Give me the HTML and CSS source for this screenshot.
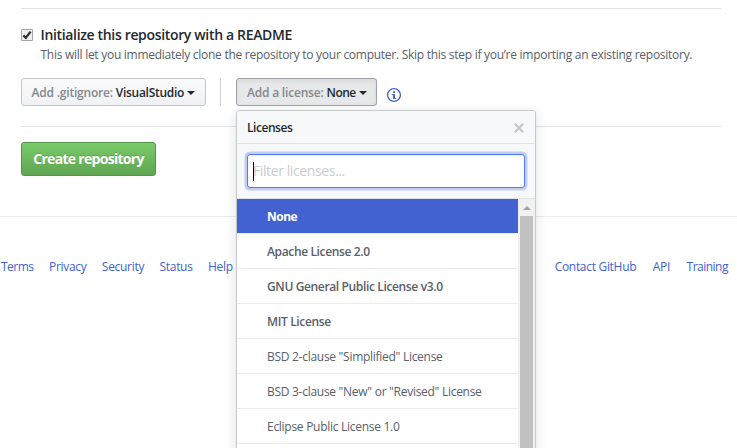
FILE: index.html
```html
<!DOCTYPE html>
<html lang="en">
<head>
<meta charset="utf-8">
<title>Create a New Repository</title>
<link rel="stylesheet" href="styles.css">
</head>
<body>
<main class="form">
  <section class="options">
    <div class="init">
      <span class="checkbox"><svg width="12" height="12" viewBox="0 0 12 12"><path d="M2.3 6.4 4.8 8.8 9.6 2.6" fill="none" stroke="#333" stroke-width="2.3"/></svg></span>
      <div>
        <div class="init-title">Initialize this repository with a README</div>
        <p class="note">This will let you immediately clone the repository to your computer. Skip this step if you’re importing an existing repository.</p>
      </div>
    </div>
    <div class="selectors">
      <button class="btn btn-ignore"><span class="muted">Add .gitignore:</span> <span class="value">VisualStudio</span><i class="caret"></i></button>
      <span class="divider"></span>
      <div class="license">
        <button class="btn btn-license"><span class="muted">Add a license:</span> <span class="value">None</span><i class="caret"></i></button>
        <div class="menu">
          <div class="menu-header"><span>Licenses</span><svg width="10" height="10" viewBox="0 0 10 10"><path d="M.8.8 9.2 9.2M9.2.8.8 9.2" stroke="#c3c6ca" stroke-width="2"/></svg></div>
          <div class="filter"><div class="filter-input"><i class="cursor"></i><span>Filter licenses...</span></div></div>
          <div class="list">
            <ul class="items">
              <li class="selected">None</li>
              <li class="featured">Apache License 2.0</li>
              <li class="featured">GNU General Public License v3.0</li>
              <li class="featured">MIT License</li>
              <li>BSD 2-clause "Simplified" License</li>
              <li>BSD 3-clause "New" or "Revised" License</li>
              <li>Eclipse Public License 1.0</li>
              <li></li>
            </ul>
            <div class="scrollbar"><i class="up"></i><i class="thumb"></i></div>
          </div>
        </div>
      </div>
      <svg class="info" width="14" height="16" viewBox="0 0 14 16"><path fill="#4162d0" fill-rule="evenodd" d="M6.3 5.69a.942.942 0 0 1-.28-.7c0-.28.09-.52.28-.7.19-.18.42-.28.7-.28.28 0 .52.09.7.28.18.19.28.42.28.7 0 .28-.09.52-.28.7a1 1 0 0 1-.7.3c-.28 0-.52-.11-.7-.3zM8 7.99c-.02-.25-.11-.48-.31-.69-.2-.19-.42-.3-.69-.31H6c-.27.02-.48.13-.69.31-.2.2-.3.44-.31.69h1v3c.02.27.11.5.31.69.2.2.42.31.69.31h1c.27 0 .48-.11.69-.31.2-.19.3-.42.31-.69H8V7.98v.01zM7 2.3c-3.14 0-5.7 2.54-5.7 5.68 0 3.14 2.56 5.7 5.7 5.7s5.7-2.55 5.7-5.7c0-3.15-2.56-5.69-5.7-5.69v.01zM7 .98c3.86 0 7 3.14 7 7s-3.14 7-7 7-7-3.12-7-7 3.14-7 7-7z"/></svg>
    </div>
  </section>
  <button class="create">Create repository</button>
</main>
<footer class="footer">
  <nav class="links links-left"><a class="tight">Terms</a><a>Privacy</a><a>Security</a><a>Status</a><a>Help</a></nav>
  <nav class="links"><a>Contact GitHub</a><a>API</a><a class="tight">Training</a></nav>
</footer>
</body>
</html>
```
FILE: styles.css
```css
* { box-sizing: border-box; }
body { margin: 0; height: 448px; overflow: hidden; background: #fff; color: #24292e; font: 12px/18px "Open Sans", "Noto Sans", sans-serif; }
button { font: inherit; }
.form { width: 700px; margin: 8px 0 0 21px; }
.options { height: 119px; padding-top: 17px; border: solid #dfe2e5; border-width: 1px 0; }
.init { display: flex; gap: 7.5px; height: 52px; }
.checkbox { flex: none; display: flex; width: 12px; height: 12px; margin-top: 3px; border-radius: 1px; background: #eee; box-shadow: inset 0 0 0 1px #a6a6a6; }
.init-title { font-size: 14px; line-height: 18px; font-weight: 550; letter-spacing: -.34px; white-space: nowrap; }
.note { margin: 2px 0 0; color: #586069; letter-spacing: -.27px; white-space: nowrap; }
.selectors { display: flex; }
.btn { display: flex; align-items: center; height: 28px; padding: 2px 0 0 9.5px; border: 1px solid #c3c6c9; border-radius: 3px; background: linear-gradient(#fafbfc, #eff1f5); color: #24292e; font-weight: 550; letter-spacing: -.2px; white-space: nowrap; }
.btn-ignore { width: 185px; }
.btn-license { width: 141px; padding-left: 10px; background: #e6e8ea; border-color: #9fa3a7; box-shadow: inset 0 2px 4px rgba(27,31,35,.08); }
.muted { color: #85898d; margin-right: 3px; }
.btn .value { letter-spacing: -.3px; }
.btn-license .value { letter-spacing: -.5px; }
.caret { margin: -1px 0 0 3px; border: 4px solid transparent; border-top-color: #24292e; border-bottom: 0; }
.divider { width: 1px; height: 28px; margin: 0 15px 0 14px; background: #cfd1d4; }
.license { position: relative; }
.info { margin: 9px 0 0 10px; }
.create { display: block; width: 135px; height: 34px; margin-top: 15px; padding: 0; border: 1px solid #53964a; border-radius: 3px; background: linear-gradient(#79cb69, #5fa552); color: #fff; font-size: 14px; font-weight: 700; letter-spacing: -.7px; white-space: nowrap; text-shadow: 0 -1px 0 rgba(0,0,0,.15); }
.footer { display: flex; justify-content: space-between; margin-top: 40px; padding: 41px 9px 0 1px; border-top: 1px solid #eaecef; }
.links { display: flex; gap: 16.5px; color: #4162d0; letter-spacing: -.3px; }
.links-left { gap: 15.4px; }
.links .tight { letter-spacing: -.5px; }
.menu { position: absolute; z-index: 2; top: 32px; left: 0; width: 300px; height: 360px; border: 1px solid #c6c8ca; border-radius: 3px; background: #fff; box-shadow: 0 3px 12px rgba(27,31,35,.15); overflow: hidden; }
.menu-header { display: flex; align-items: center; justify-content: space-between; height: 33px; padding: 1px 11px 0 10px; border-bottom: 1px solid #e1e4e8; background: #f6f8fa; font-weight: 550; letter-spacing: -.45px; }
.filter { height: 55px; padding: 10px; border-bottom: 1px solid #dfe2e5; background: #f6f8fa; }
.filter-input { display: flex; align-items: center; height: 34px; padding: 0 5px; border: 1px solid #4f7cf5; border-radius: 3px; background: #fff; box-shadow: 0 0 0 2.5px #c1cdf1, inset 0 1px 2px rgba(27,31,35,.075); color: #c9cbce; font-size: 14px; letter-spacing: -.4px; }
.cursor { width: 1px; height: 19px; margin-right: -1px; background: #000; }
.list { display: flex; height: 272px; }
.items { flex: 1; margin: 0; padding: 0; list-style: none; color: #586069; }
.items li { height: 35px; padding: 0 0 0 30px; border-bottom: 1px solid #eaecef; line-height: 36px; letter-spacing: -.28px; }
.items .featured { font-weight: 600; letter-spacing: -.36px; }
.items .selected { background: #4162d0; background-clip: padding-box; color: #fff; font-weight: 700; letter-spacing: -.5px; }
.scrollbar { display: flex; flex-direction: column; align-items: center; width: 17px; background: #f1f1f1; }
.up { margin: 7px 0 6px; border: 4px solid transparent; border-bottom-color: #a3a3a3; border-top: 0; }
.thumb { flex: 1; width: 13px; background: #c1c1c1; }
```
